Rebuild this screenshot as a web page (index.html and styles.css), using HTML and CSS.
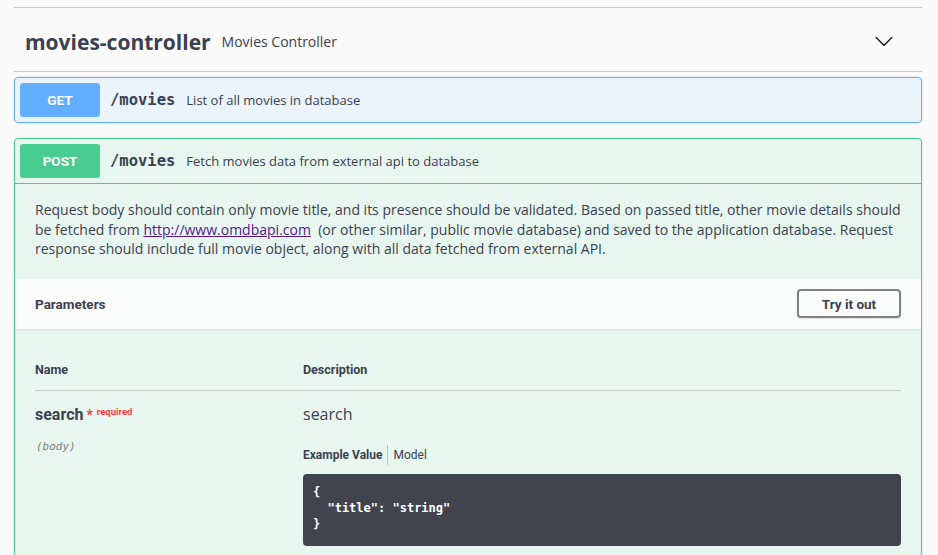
FILE: index.html
```html
<!DOCTYPE html>
<html>
<head>
<meta charset="utf-8">
<link rel="stylesheet" href="styles.css">
</head>
<body>
<div class="wrapper">
  <div class="prev-tag"></div>
  <section class="tag-section">
    <h4 class="tag">
      <span class="tag-name">movies-controller</span>
      <small class="tag-desc">Movies Controller</small>
      <span class="spacer"></span>
      <svg class="arrow" width="20" height="20" viewBox="0 0 20 20"><path d="M17.418 6.109c.272-.268.709-.268.979 0s.271.701 0 .969l-7.908 7.83c-.27.268-.707.268-.979 0l-7.908-7.830c-.27-.268-.27-.701 0-.969.271-.268.709-.268.979 0L10 13.25l7.418-7.141z" fill="#222"/></svg>
    </h4>
    <div class="opblock get">
      <div class="summary">
        <span class="method">GET</span>
        <span class="path">/movies</span>
        <span class="summary-desc">List of all movies in database</span>
      </div>
    </div>
    <div class="opblock post">
      <div class="summary">
        <span class="method">POST</span>
        <span class="path">/movies</span>
        <span class="summary-desc">Fetch movies data from external api to database</span>
      </div>
      <div class="body">
        <div class="description">
          <p>Request body should contain only movie title, and its presence should be validated. Based on passed title, other movie details should be fetched from <a href="#">http://www.omdbapi.com</a>&nbsp; (or other similar, public movie database) and saved to the application database. Request response should include full movie object, along with all data fetched from external API.</p>
        </div>
        <div class="section-header">
          <h4 class="section-title">Parameters</h4>
          <button class="try-out">Try it out</button>
        </div>
        <div class="params">
          <table class="param-table">
            <thead>
              <tr><th class="col-name">Name</th><th>Description</th></tr>
            </thead>
            <tbody>
              <tr>
                <td class="col-name">
                  <div class="param-name">search<span class="star">*</span><span class="required">required</span></div>
                  <div class="param-in">(body)</div>
                </td>
                <td>
                  <div class="param-desc">search</div>
                  <div class="tabs"><span class="tab active">Example Value</span><span class="tab">Model</span></div>
                  <pre class="example">{
  "title": "string"
}</pre>
                </td>
              </tr>
            </tbody>
          </table>
        </div>
      </div>
    </div>
  </section>
</div>
</body>
</html>
```

FILE: styles.css
```css
* { box-sizing: border-box; }
html, body { margin: 0; padding: 0; background: #fafafa; }
body { font-family: "Open Sans", sans-serif; color: #3b4151; }
.wrapper { padding: 0 16px 0 14px; }
.prev-tag { height: 8px; border-bottom: 1px solid #cbcbcd; }
.tag {
  margin: 0 0 5px;
  height: 64px;
  display: flex;
  align-items: center;
  padding: 4px 28px 0 11px;
  border-bottom: 1px solid #cbcbcd;
  font-weight: normal;
}
.tag-name { font-family: "Open Sans", sans-serif; font-weight: 700; font-size: 21px; color: #3b4151; }
.tag-desc { font-size: 14px; margin-left: 11px; color: #3b4151; }
.spacer { flex: 1; }
.arrow { margin-top: -2px; }

.opblock { border: 1px solid; border-radius: 4px; margin-bottom: 15px; box-shadow: 0 0 3px rgba(0,0,0,.12); }
.opblock.get { background: #ebf3fb; border-color: #61affe; }
.opblock.post { background: #e8f6f0; border-color: #49cc90; }
.summary { display: flex; align-items: center; padding: 5px; }
.post .summary { border-bottom: 1px solid #49cc90; }
.method {
  width: 80px; height: 34px; border-radius: 3px;
  display: flex; align-items: center; justify-content: center;
  font-family: Roboto, sans-serif; font-weight: 700; font-size: 13.5px; color: #fff;
  text-shadow: 0 1px 0 rgba(0,0,0,.1);
}
.get .method { background: #61affe; }
.post .method { background: #49cc90; }
.path { font-family: "DejaVu Sans Mono", monospace; font-weight: 700; font-size: 15.5px; padding: 0 11px 0 10px; color: #3b4151; }
.summary-desc { font-size: 13px; color: #3b4151; }

.description { padding: 16px 20px 20px; }
.description p { margin: 0; font-size: 14px; line-height: 19.5px; }
.description a { color: #551a8b; }

.section-header {
  display: flex; align-items: center; justify-content: space-between;
  height: 50px; padding: 0 20px;
  background: rgba(255,255,255,.8);
  box-shadow: 0 1px 2px rgba(0,0,0,.1);
}
.section-title { margin: 0; font-family: Roboto, sans-serif; font-weight: 700; font-size: 13.5px; }
.try-out {
  width: 104px; height: 29px;
  border: 2px solid #808080; border-radius: 4px; background: transparent;
  font-family: Roboto, sans-serif; font-weight: 700; font-size: 13.5px; color: #3b4151;
  box-shadow: 0 1px 2px rgba(0,0,0,.1);
}
.params { padding: 20px 20px 0; }
.param-table { width: 100%; border-collapse: collapse; }
.param-table th {
  text-align: left; padding: 12px 0; font-family: Roboto, sans-serif; font-weight: 700; font-size: 12.5px;
  line-height: 17px; border-bottom: 1px solid #c6cbc9;
}
.col-name { width: 268px; }
.param-table td { vertical-align: top; padding: 13px 0 10px; }
.param-name { font-family: Roboto, sans-serif; font-weight: 700; font-size: 16px; line-height: 22px; }
.star { color: #f93e3e; font-size: 14px; margin-left: 3px; position: relative; top: 0; }
.required { color: #f93e3e; font-size: 9.5px; margin-left: 4px; position: relative; top: -5px; font-family: Roboto, sans-serif; }
.param-in { font-family: "DejaVu Sans Mono", monospace; font-style: italic; font-size: 11px; color: #808080; margin-top: 12px; padding-left: 1px; }
.param-desc { font-size: 16px; line-height: 22px; font-weight: 400; margin-top: -1px; }
.tabs { display: flex; align-items: center; margin-top: 20px; font-size: 12px; }
.tab { font-family: Roboto, sans-serif; color: #3b4151; line-height: 20px; }
.tab.active { font-weight: 700; padding-right: 5px; border-right: 1px solid rgba(0,0,0,.2); }
.tab + .tab { padding-left: 5px; }
.example {
  margin: 9px 0 0; padding: 10px 10px 14px; background: #41444e; border-radius: 4px;
  font-family: "DejaVu Sans Mono", monospace; font-size: 12px; line-height: 16px; font-weight: 600; color: #fff;
}
```
